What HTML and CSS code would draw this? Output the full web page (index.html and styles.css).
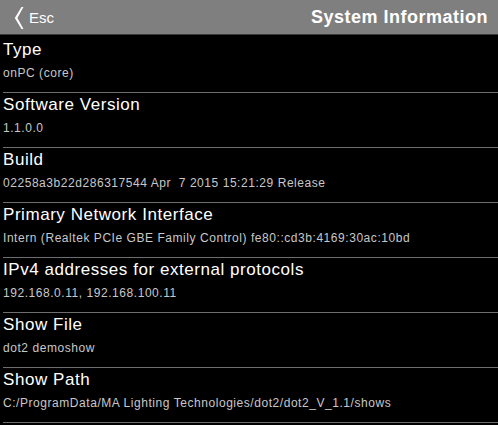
FILE: index.html
```html
<html>
<head>
    <title>System Information</title>
    <link rel="stylesheet" href="styles.css">
</head>
<body>
<div class="topbar">
    <a class="back" href="#">
        <svg class="chevron" width="10" height="22" viewBox="0 0 10 22">
            <polygon points="7.5,0 9.5,0 3.4,11 9.5,22 7.5,22 0.8,11" fill="#fff"/>
        </svg>
        <span>Esc</span>
    </a>
    <div class="title">System Information</div>
</div>

<ul class="info">
    <li>
        <div class="label">Type</div>
        <div class="value">onPC (core)</div>
    </li>
    <li>
        <div class="label">Software Version</div>
        <div class="value">1.1.0.0</div>
    </li>
    <li>
        <div class="label">Build</div>
        <div class="value">02258a3b22d286317544 Apr&nbsp; 7 2015 15:21:29 Release</div>
    </li>
    <li>
        <div class="label">Primary Network Interface</div>
        <div class="value">Intern (Realtek PCIe GBE Family Control) fe80::cd3b:4169:30ac:10bd</div>
    </li>
    <li>
        <div class="label">IPv4 addresses for external protocols</div>
        <div class="value">192.168.0.11, 192.168.100.11</div>
    </li>
    <li>
        <div class="label">Show File</div>
        <div class="value">dot2 demoshow</div>
    </li>
    <li>
        <div class="label">Show Path</div>
        <div class="value">C:/ProgramData/MA Lighting Technologies/dot2/dot2_V_1.1/shows</div>
    </li>
</ul>
</body>
</html>
```

FILE: styles.css
```css
body {
    margin: 0;
    background: #000;
    color: #fff;
    font-family: "Liberation Sans", Arial, sans-serif;
    overflow: hidden;
}

.topbar {
    height: 34px;
    background: #7f7f7f;
    border-bottom: 1px solid #3a3a3a;
    display: flex;
    align-items: center;
    justify-content: space-between;
}

.back {
    display: flex;
    align-items: center;
    color: #fff;
    text-decoration: none;
    font-size: 15px;
    padding-left: 14px;
}

.chevron {
    margin-right: 5px;
    margin-top: 1px;
}

.title {
    font-size: 18px;
    font-weight: bold;
    letter-spacing: 0.5px;
    padding-right: 10px;
}

.info {
    list-style: none;
    margin: 0;
    padding: 3px 0 0 0;
}

.info li {
    height: 54px;
    margin-left: 3px;
    border-bottom: 1px solid #6e6e6e;
}

.label {
    font-size: 17px;
    letter-spacing: 0.55px;
    line-height: 22px;
    padding-top: 1px;
}

.value {
    font-size: 12px;
    letter-spacing: 0.55px;
    line-height: 14px;
    padding-top: 5px;
    color: #c8c8c8;
}
```
